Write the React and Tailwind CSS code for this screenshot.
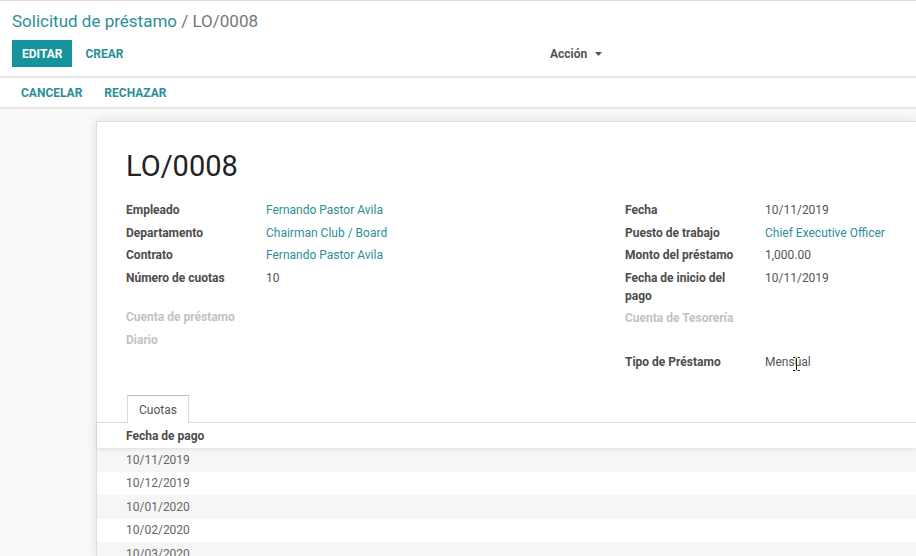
import React from 'react'

const teal = 'text-[#2b8f97]'

const Field = ({ label, value, link, muted, multi }) => (
    <div className={`flex ${multi ? 'py-[2.25px] leading-[18px]' : 'leading-[22.5px]'}`}>
        <div className={`w-[140px] pr-[20px] font-bold ${muted ? 'text-[#c2c2c2]' : 'text-[#4c4c4c]'}`}>{label}</div>
        <div className={link ? teal : 'text-[#555]'}>{value}</div>
    </div>
)

const App = () => {
    const dates = ['10/11/2019', '10/12/2019', '10/01/2020', '10/02/2020', '10/03/2020']

    return (
        <div className="w-[916px] h-[556px] overflow-hidden bg-white font-['Roboto',sans-serif] flex flex-col relative">
            {/* top accent line */}
            <div className="h-px shrink-0 bg-[#ecd6e3]" />

            {/* control panel */}
            <div className="shrink-0 px-3 pt-[9px] pb-[9px]">
                <div className="text-[17px] leading-[22px]">
                    <span className={teal}>Solicitud de préstamo</span>
                    <span className="text-[#777]"> / LO/0008</span>
                </div>
                <div className="flex items-center mt-[8px] h-[27px]">
                    <div className="w-[538px] flex items-center gap-[13px]">
                        <button className="h-[27px] px-[10px] bg-[#17939b] text-white text-[12px] font-bold">EDITAR</button>
                        <button className={`text-[12px] font-bold ${teal}`}>CREAR</button>
                    </div>
                    <div className="flex items-center gap-[8px] text-[12px] font-bold text-[#555]">
                        Acción
                        <svg width="7" height="4" viewBox="0 0 7 4"><path d="M0 0h7L3.5 4z" fill="#555" /></svg>
                    </div>
                </div>
            </div>

            {/* status bar */}
            <div className="shrink-0 border-t-2 border-b-2 border-[#e5e5e5] h-[33px] flex items-center px-[21px] gap-[22px] text-[12px] font-bold text-[#2b8f97]">
                <span>CANCELAR</span>
                <span>RECHAZAR</span>
            </div>

            {/* form view */}
            <div className="flex-1 min-h-0 bg-[#f9f9f9] pt-[12px] pl-[96px]">
                <div className="h-full bg-white border-l border-t border-[#dcdcdc] shadow-[0_0_10px_rgba(0,0,0,0.12)] text-[12px]">
                    <h1 className="pl-[29px] pt-[27px] text-[29px] leading-[34px] text-[#222]">LO/0008</h1>

                    <div className="flex pl-[29px] mt-[16px]">
                        <div className="w-[499px] flex flex-col">
                            <Field label="Empleado" value="Fernando Pastor Avila" link />
                            <Field label="Departamento" value="Chairman Club / Board" link />
                            <Field label="Contrato" value="Fernando Pastor Avila" link />
                            <Field label="Número de cuotas" value="10" />
                            <div className="mt-[17px]">
                                <Field label="Cuenta de préstamo" muted />
                                <Field label="Diario" muted />
                            </div>
                        </div>
                        <div className="flex flex-col relative">
                            <Field label="Fecha" value="10/11/2019" />
                            <Field label="Puesto de trabajo" value="Chief Executive Officer" link />
                            <Field label="Monto del préstamo" value="1,000.00" />
                            <Field label="Fecha de inicio del pago" value="10/11/2019" multi />
                            <Field label="Cuenta de Tesorería" muted />
                            <div className="mt-[21px]">
                                <Field label="Tipo de Préstamo" value="Mensual" />
                            </div>
                            {/* mouse cursor */}
                            <svg className="absolute left-[168px] top-[158px]" width="7" height="14" viewBox="0 0 7 14">
                                <path d="M0 0.5h2.5M4.5 0.5h2.5M3.5 1v12M0 13.5h2.5M4.5 13.5h2.5" stroke="#222" strokeWidth="1" fill="none" />
                            </svg>
                        </div>
                    </div>

                    {/* notebook */}
                    <div className="mt-[22px] border-b border-[#d9d9d9] pl-[30px] flex">
                        <div className="h-[28px] w-[62px] -mb-px bg-white border border-b-0 border-[#d9d9d9] border-t-[#cdb3bf] flex items-center justify-center text-[#555]">
                            Cuotas
                        </div>
                    </div>

                    <div className="relative z-10 h-[25px] flex items-center pl-[29px] font-bold text-[#4c4c4c] bg-white shadow-[0_2px_3px_rgba(0,0,0,0.07)]">
                        Fecha de pago
                    </div>
                    {dates.map((d, i) => (
                        <div key={d} className={`h-[23.5px] flex items-center pl-[29px] text-[#666] ${i % 2 === 0 ? 'bg-[#f6f6f6]' : 'bg-white'}`}>
                            {d}
                        </div>
                    ))}
                </div>
            </div>
        </div>
    )
}

export default App
